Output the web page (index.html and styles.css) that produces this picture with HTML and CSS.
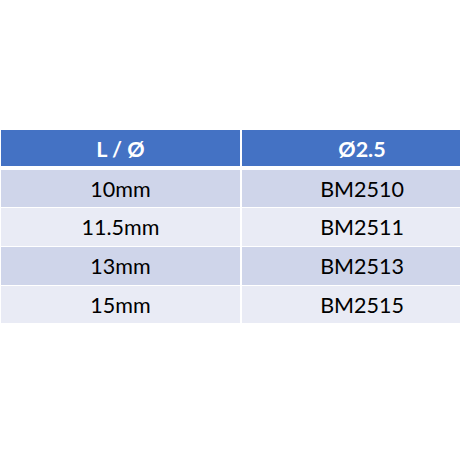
FILE: index.html
```html
<!DOCTYPE html>
<html>
<head>
<meta charset="utf-8">
<link rel="stylesheet" href="styles.css">
</head>
<body>
<div class="page">
  <div class="table">
    <div class="cell head">L / Ø</div>
    <div class="cell head">Ø2.5</div>
    <div class="cell odd">10mm</div>
    <div class="cell odd">BM2510</div>
    <div class="cell even">11.5mm</div>
    <div class="cell even">BM2511</div>
    <div class="cell odd">13mm</div>
    <div class="cell odd">BM2513</div>
    <div class="cell even">15mm</div>
    <div class="cell even">BM2515</div>
  </div>
</div>
</body>
</html>
```
FILE: styles.css
```css
html, body {
  margin: 0;
  padding: 0;
  background: #ffffff;
}
.page {
  width: 460px;
  height: 459px;
  overflow: hidden;
  padding: 130px 0 0 1px;
  box-sizing: border-box;
}
.table {
  display: grid;
  grid-template-columns: 239px 240px;
  grid-template-rows: 39px 37px 38px 38px 37px;
  column-gap: 2px;
  row-gap: 1px;
  width: 481px;
  background: #ffffff;
  font-family: Lato, "Liberation Sans", sans-serif;
  font-size: 21.5px;
  color: #000000;
}
.cell {
  display: flex;
  align-items: center;
  justify-content: center;
}
.head {
  background: #4472c4;
  color: #ffffff;
  font-weight: 700;
  margin-bottom: 3px;
  padding-top: 2px;
}
.odd {
  background: #cfd5ea;
}
.even {
  background: #e9ebf5;
}
```
